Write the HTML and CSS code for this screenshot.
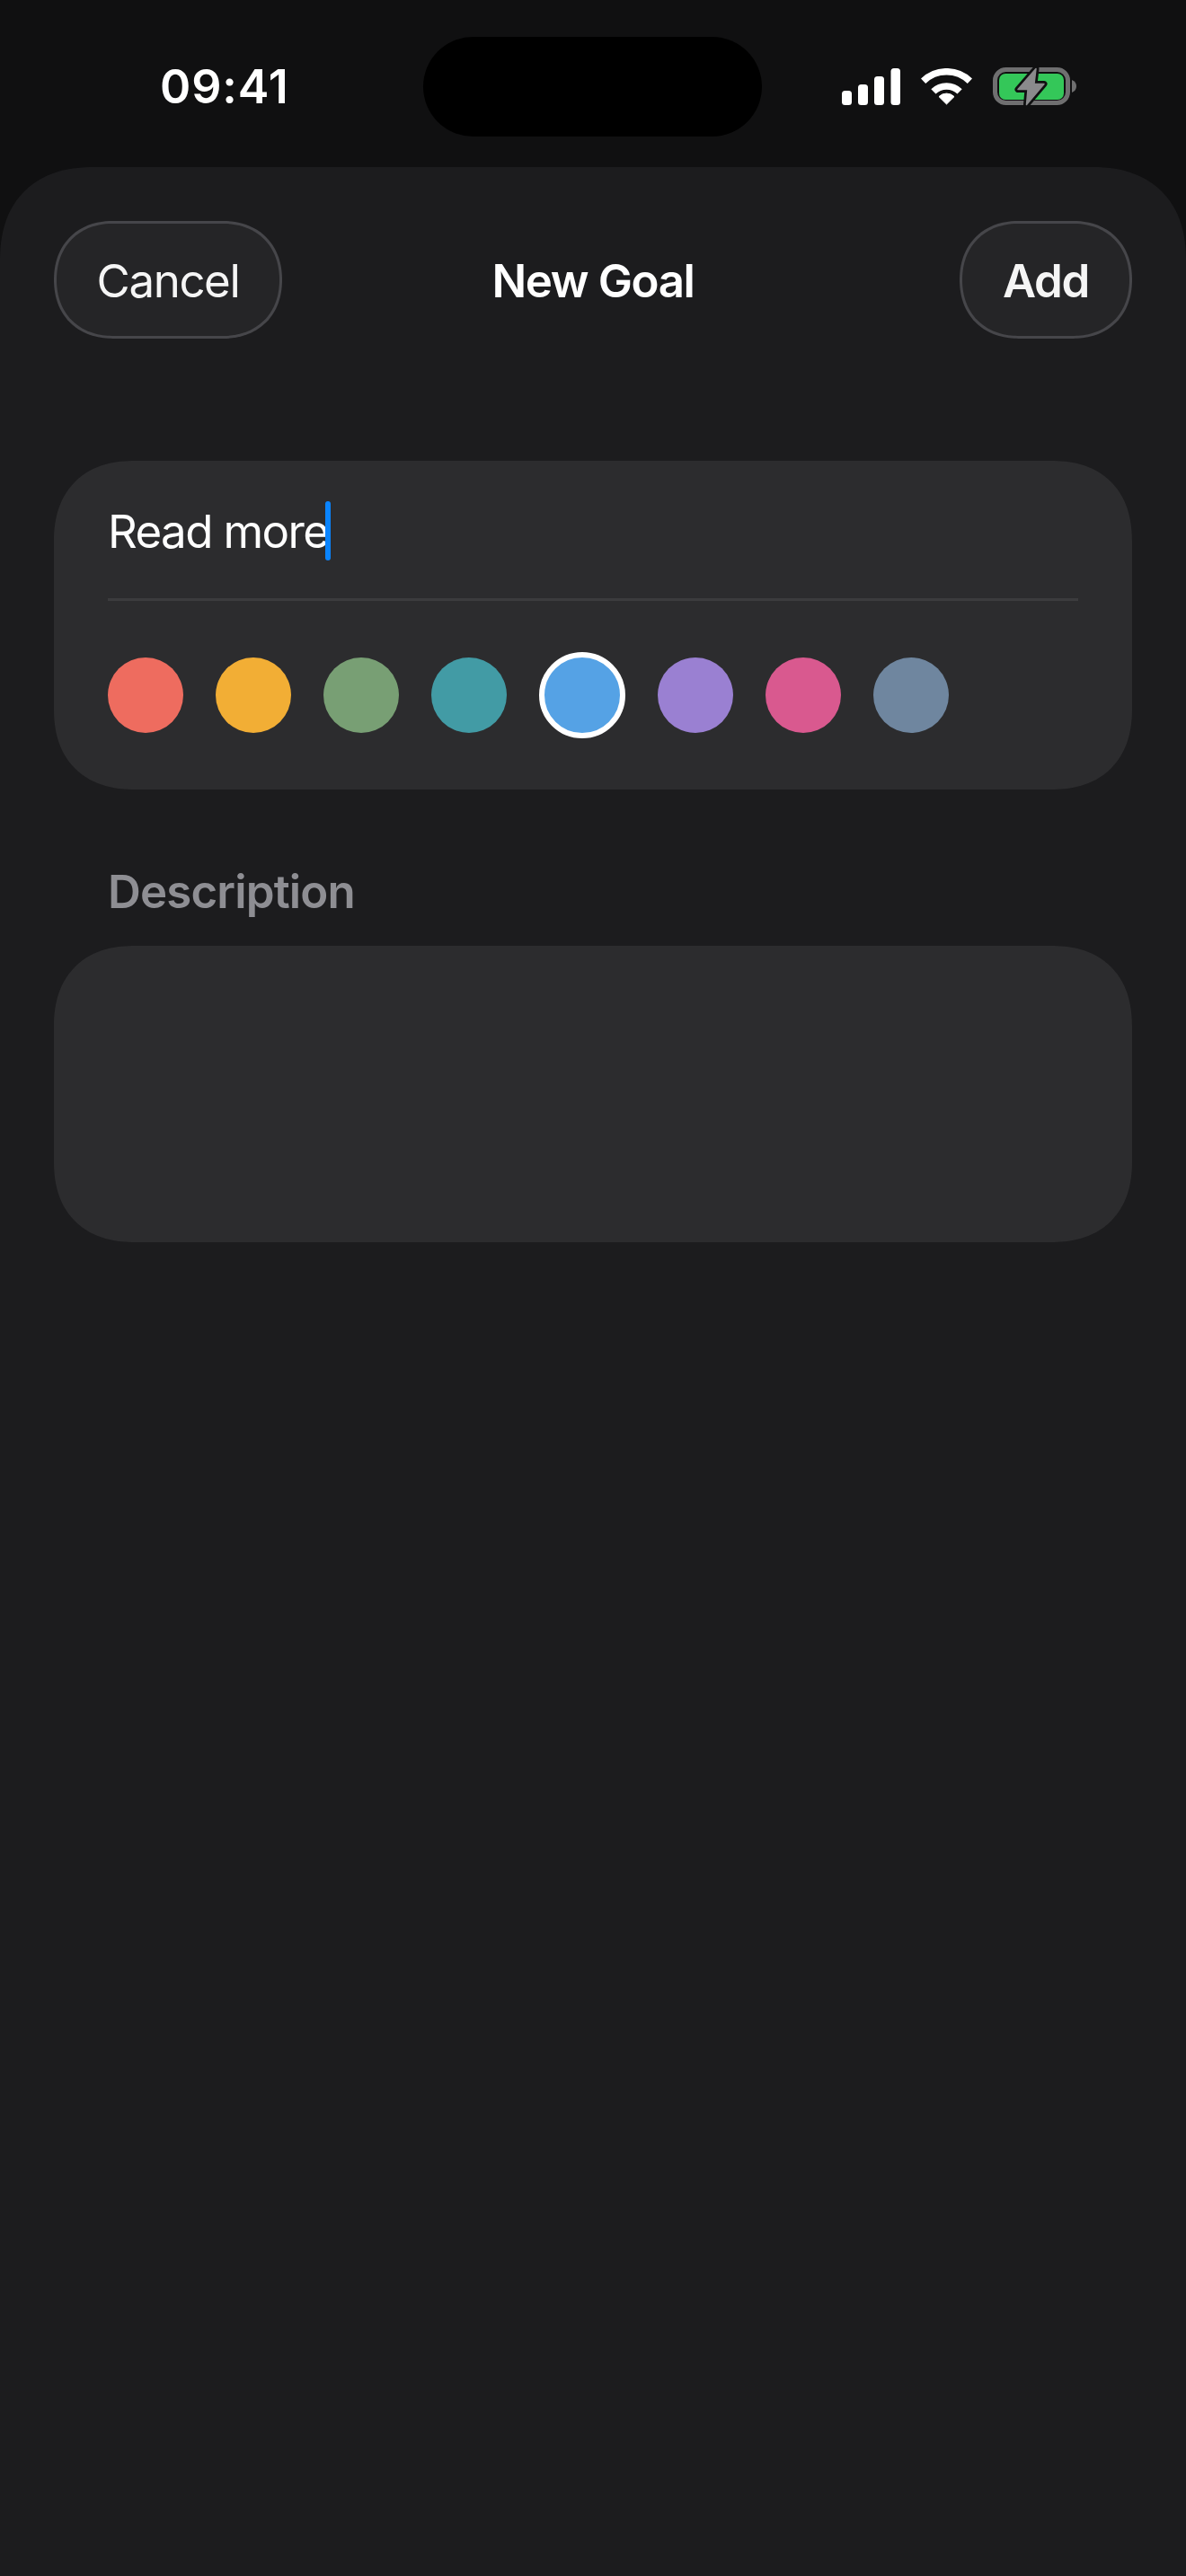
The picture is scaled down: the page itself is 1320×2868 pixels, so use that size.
FILE: index.html
```html
<!DOCTYPE html>
<html lang="en">
<head>
    <meta charset="UTF-8">
    <meta name="viewport" content="width=device-width, initial-scale=1.0">
    <title>New Goal</title>
    <link rel="stylesheet" href="styles.css">
</head>
<body>
<header class="status-bar">
    <span class="time">09:41</span>
    <div class="island"></div>
    <div class="status-icons">
        <svg class="icon-signal" width="65" height="41" viewBox="0 0 65 41">
            <rect x="0" y="25" width="11" height="16" rx="3.5"/>
            <rect x="18" y="18" width="11" height="23" rx="3.5"/>
            <rect x="36" y="9" width="11" height="32" rx="3.5"/>
            <rect x="54.5" y="0" width="10.5" height="41" rx="3.5"/>
        </svg>
        <svg class="icon-wifi" width="57" height="41" viewBox="0 0 57 41">
            <path class="wifi-arc" stroke-width="7.5" d="M2.6 14.2A37.25 37.25 0 0 1 54.4 14.2"/>
            <path class="wifi-arc" stroke-width="7.5" d="M13.9 25.9A21 21 0 0 1 43.1 25.9"/>
            <path class="wifi-dot" d="M28.5 40L20 31.6A12 12 0 0 1 37 31.6Z"/>
        </svg>
        <svg class="icon-battery" width="93" height="49" viewBox="0 0 93 49">
            <rect class="battery-case" x="2.5" y="5.5" width="81" height="37" rx="12"/>
            <rect class="battery-level" x="7" y="10" width="72" height="29" rx="7"/>
            <path class="battery-nub" d="M88 17q5 2 5 7t-5 7z"/>
            <path class="battery-bolt-edge" d="M48 4.500L28 27.500H39L37.500 44.500L57 21.500H46Z"/>
            <path class="battery-bolt" d="M48 4.500L28 27.500H39L37.500 44.500L57 21.500H46Z"/>
        </svg>
    </div>
</header>

<main class="sheet">
    <nav class="sheet-nav">
        <button class="nav-btn cancel-btn" type="button">Cancel</button>
        <h1 class="sheet-title">New Goal</h1>
        <button class="nav-btn add-btn" type="button">Add</button>
    </nav>

    <section class="card goal-card">
        <div class="goal-name">
            <span>Read more</span><span class="caret"></span>
        </div>
        <div class="divider"></div>
        <div class="colors">
            <span class="color color-red"></span>
            <span class="color color-orange"></span>
            <span class="color color-green"></span>
            <span class="color color-teal"></span>
            <span class="color color-blue selected"></span>
            <span class="color color-purple"></span>
            <span class="color color-pink"></span>
            <span class="color color-slate"></span>
        </div>
    </section>

    <h2 class="section-label">Description</h2>
    <section class="card description-card"></section>
</main>
</body>
</html>
```

FILE: styles.css
```css
* {
    box-sizing: border-box;
}
body {
    margin: 0;
    width: 1320px;
    height: 2868px;
    display: flex;
    flex-direction: column;
    overflow: hidden;
    background-color: #101011;
    color: white;
    font-family: 'Inter', 'Liberation Sans', sans-serif;
}

/* status bar */
.status-bar {
    flex: none;
    height: 186px;
    display: flex;
    align-items: flex-start;
    padding: 41px 0 0 178px;
}
.time {
    width: 293px;
    height: 111px;
    line-height: 111px;
    font-size: 52px;
    font-weight: 600;
    letter-spacing: 0.9px;
}
.island {
    width: 377px;
    height: 111px;
    margin-right: 89px;
    border-radius: 56px;
    background-color: black;
}
.status-icons {
    display: flex;
    align-items: center;
    gap: 23px;
    height: 49px;
    margin-top: 31px;
}
.icon-signal,
.icon-wifi {
    fill: white;
}
.wifi-arc {
    fill: none;
    stroke: white;
}
.wifi-dot {
    stroke: white;
    stroke-width: 1;
    stroke-linejoin: round;
}
.battery-case {
    fill: none;
    stroke: #6f6f70;
    stroke-width: 5;
}
.battery-level {
    fill: #34c759;
}
.battery-nub {
    fill: #6f6f70;
}
.battery-bolt-edge {
    fill: #101011;
    stroke: #101011;
    stroke-width: 7;
    stroke-linejoin: round;
}
.battery-bolt {
    fill: #8a8a8c;
    stroke: #8a8a8c;
    stroke-width: 1.5;
    stroke-linejoin: round;
}

/* sheet */
.sheet {
    flex: 1;
    padding: 60px 60px 0;
    background-color: #1c1c1e;
    border-radius: 88px 88px 0 0;
}
.sheet-nav {
    display: grid;
    grid-template-columns: 1fr auto 1fr;
    align-items: center;
}
.nav-btn {
    height: 131px;
    padding: 2px 0 0;
    border: 3px solid #46464a;
    border-radius: 66px;
    background-color: #252527;
    color: #f5f5f5;
    font-family: inherit;
    font-size: 51px;
    letter-spacing: -1.4px;
}
.cancel-btn {
    width: 254px;
    justify-self: start;
    font-weight: 400;
}
.add-btn {
    width: 192px;
    justify-self: end;
    font-weight: 600;
}
.sheet-title {
    margin: 0;
    padding-top: 2px;
    font-size: 51px;
    font-weight: 600;
    letter-spacing: -1.4px;
}

/* cards */
.card {
    border-radius: 76px;
    background-color: #2c2c2e;
}
.goal-card {
    margin-top: 136px;
    padding: 0 60px 57px;
}
.goal-name {
    height: 153px;
    padding-top: 3px;
    display: flex;
    align-items: center;
    font-size: 51px;
    letter-spacing: -1.6px;
}
.caret {
    width: 6px;
    height: 66px;
    margin-left: -3px;
    border-radius: 3px;
    background-color: #0a84ff;
}
.divider {
    height: 3px;
    background-color: #3c3c3e;
}
.colors {
    display: flex;
    align-items: center;
    gap: 36px;
    margin-top: 57px;
}
.color {
    width: 84px;
    height: 84px;
    border-radius: 50%;
}
.color.selected {
    width: 96px;
    height: 96px;
    border: 6px solid white;
}
.color-red { background-color: #ee6c5f; }
.color-orange { background-color: #f2ae35; }
.color-green { background-color: #789f74; }
.color-teal { background-color: #429ba5; }
.color-blue { background-color: #55a2e5; }
.color-purple { background-color: #9a80d2; }
.color-pink { background-color: #d9598f; }
.color-slate { background-color: #6f869f; }

.section-label {
    margin: 84px 0 30px 60px;
    font-size: 51px;
    line-height: 60px;
    font-weight: 600;
    letter-spacing: -0.85px;
    color: #8e8e93;
}
.description-card {
    height: 330px;
}

/* continuous corners where the browser has them */
@supports (corner-shape: superellipse(1.2)) {
    .sheet {
        border-radius: 104px 104px 0 0;
        corner-shape: superellipse(1.2);
    }
    .card {
        border-radius: 90px;
        corner-shape: superellipse(1.2);
    }
    .nav-btn {
        corner-shape: superellipse(1.12);
    }
}
```
